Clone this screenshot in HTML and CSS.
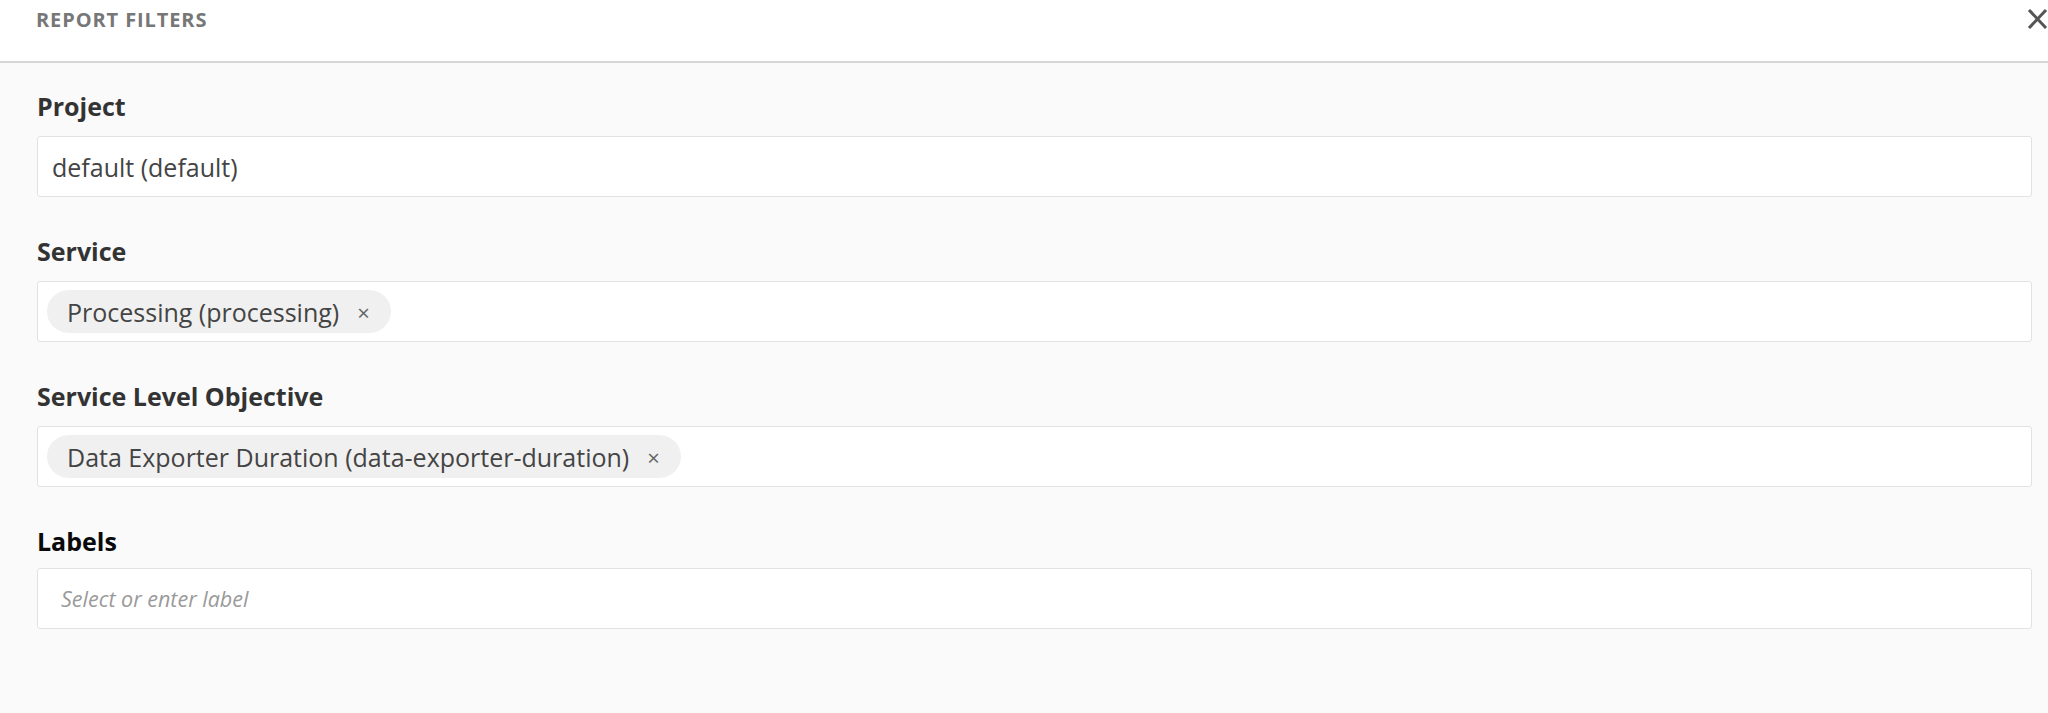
FILE: index.html
```html
<!DOCTYPE html>
<html lang="en">
<head>
    <meta charset="UTF-8">
    <meta name="viewport" content="width=device-width, initial-scale=1.0">
    <title>Report Filters</title>
    <link rel="stylesheet" href="styles.css">
</head>
<body>
    <div class="panel">
        <div class="panel-header">
            <h2 class="panel-title">Report Filters</h2>
            <button class="close-btn" type="button" aria-label="Close">
                <svg width="21" height="20" viewBox="0 0 21 20">
                    <path d="M2 1 L19 19 M19 1 L2 19" stroke="#555" stroke-width="3" fill="none"/>
                </svg>
            </button>
        </div>

        <form class="filters">
            <div class="field">
                <label>Project</label>
                <div class="select">
                    <span class="value">default (default)</span>
                </div>
            </div>

            <div class="field">
                <label>Service</label>
                <div class="select multi">
                    <span class="chip">Processing (processing)<span class="chip-x">&times;</span></span>
                </div>
            </div>

            <div class="field">
                <label>Service Level Objective</label>
                <div class="select multi">
                    <span class="chip">Data Exporter Duration (data-exporter-duration)<span class="chip-x">&times;</span></span>
                </div>
            </div>

            <div class="field tight">
                <label class="dark">Labels</label>
                <div class="select multi">
                    <span class="placeholder">Select or enter label</span>
                </div>
            </div>
        </form>
    </div>
</body>
</html>
```

FILE: styles.css
```css
body {
    margin: 0;
    padding: 0;
    font-family: "Open Sans", "Noto Sans", sans-serif;
    background-color: #fafafa;
    color: #333;
}
.panel {
    min-height: 713px;
}
.panel-header {
    display: flex;
    justify-content: space-between;
    align-items: flex-start;
    height: 63px;
    box-sizing: border-box;
    padding-left: 36px;
    background-color: #fff;
    border-bottom: 2px solid #d6d6d6;
}
.panel-title {
    margin: 0;
    font-size: 20px;
    font-weight: 700;
    line-height: 40px;
    letter-spacing: 0.9px;
    text-transform: uppercase;
    color: #777;
}
.close-btn {
    margin-top: 9px;
    margin-right: 0;
    padding: 0;
    border: none;
    background: none;
    cursor: pointer;
    line-height: 0;
}
.filters {
    display: flex;
    flex-direction: column;
    gap: 37px;
    padding: 26px 16px 0 37px;
}
.field {
    display: flex;
    flex-direction: column;
    gap: 13px;
}
.field.tight {
    gap: 10px;
}
label {
    font-size: 25px;
    font-weight: 700;
    line-height: 34px;
    color: #333;
}
label.dark {
    color: #0a0a0a;
}
.select {
    display: flex;
    align-items: center;
    height: 61px;
    box-sizing: border-box;
    padding: 0 14px;
    background-color: #fff;
    border: 1px solid #e2e2e2;
    border-radius: 3px;
    font-size: 25px;
    line-height: 34px;
    color: #444;
}
.select.multi {
    padding: 0 9px;
}
.chip {
    display: inline-flex;
    align-items: center;
    height: 43px;
    padding: 0 21px 0 20px;
    background-color: #f0f0f0;
    border-radius: 22px;
    color: #444;
}
.chip-x {
    margin-left: 18px;
    font-size: 22px;
    color: #666;
}
.placeholder {
    padding-left: 14px;
    font-size: 21.5px;
    font-style: italic;
    color: #9a9a9a;
}
```
